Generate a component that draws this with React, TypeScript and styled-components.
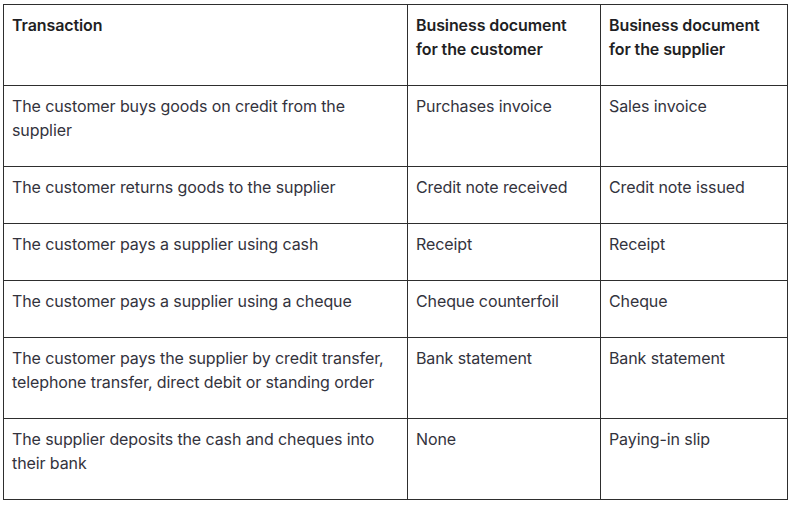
import React from "react";
import styled, { createGlobalStyle } from "styled-components";

const Global = createGlobalStyle`
  html, body { margin: 0; padding: 0; background: #fff; }
  body { font-family: Inter, "Noto Sans", sans-serif; }
`;

const Page = styled.div`
  padding: 4px 0 0 3px;
`;

const Table = styled.table`
  border-collapse: collapse;
  width: 784px;
  table-layout: fixed;
`;

const Col = styled.col<{ $w: number }>`
  width: ${(p) => p.$w}px;
`;

const Cell = styled.td<{ $head?: boolean }>`
  border: 1px solid #2e2e2e;
  padding: 8px 8px 24px 8px;
  vertical-align: top;
  text-align: left;
  font-size: 16px;
  line-height: 24px;
  letter-spacing: -0.1px;
  color: ${(p) => (p.$head ? "#1f1f24" : "#33333d")};
  font-weight: ${(p) => (p.$head ? 600 : 400)};
`;

const rows: [string, string, string][] = [
  ["The customer buys goods on credit from the supplier", "Purchases invoice", "Sales invoice"],
  ["The customer returns goods to the supplier", "Credit note received", "Credit note issued"],
  ["The customer pays a supplier using cash", "Receipt", "Receipt"],
  ["The customer pays a supplier using a cheque", "Cheque counterfoil", "Cheque"],
  [
    "The customer pays the supplier by credit transfer, telephone transfer, direct debit or standing order",
    "Bank statement",
    "Bank statement",
  ],
  ["The supplier deposits the cash and cheques into their bank", "None", "Paying-in slip"],
];

export default function App() {
  return (
    <Page>
      <Global />
      <Table>
        <colgroup>
          <Col $w={404} />
          <Col $w={193} />
          <Col $w={187} />
        </colgroup>
        <thead>
          <tr>
            <Cell as="th" $head>Transaction</Cell>
            <Cell as="th" $head>Business document for the customer</Cell>
            <Cell as="th" $head>Business document for the supplier</Cell>
          </tr>
        </thead>
        <tbody>
          {rows.map((r, i) => (
            <tr key={i}>
              {r.map((c, j) => (
                <Cell key={j}>{c}</Cell>
              ))}
            </tr>
          ))}
        </tbody>
      </Table>
    </Page>
  );
}
